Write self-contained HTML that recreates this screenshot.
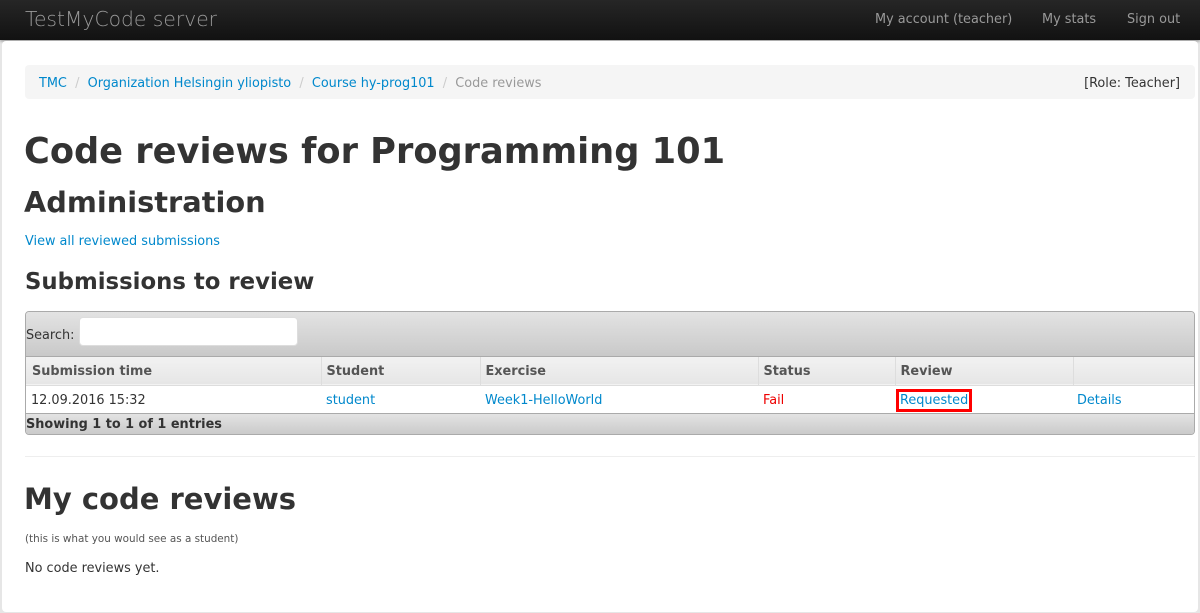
<!DOCTYPE html>
<html><head><style>
*{box-sizing:border-box;margin:0;padding:0}
body{width:1200px;height:613px;background:#e6e6e6;font-family:"DejaVu Sans","Liberation Sans",sans-serif;font-size:12.85px;color:#333;position:relative;overflow:hidden}
.a{position:absolute;white-space:nowrap}
a{color:#0088cc;text-decoration:none}
.nav{position:absolute;left:0;top:0;width:1200px;height:40px;background:linear-gradient(#262626,#121212);box-shadow:0 1px 3px rgba(0,0,0,.4)}
.wrap{position:absolute;left:2px;top:41px;width:1196px;height:571px;background:#fff;border-radius:4px}
.bc{position:absolute;left:25px;top:65px;width:1170px;height:34px;background:#f5f5f5;border-radius:4px}
.sep{color:#ccc}
th,td{text-align:left;padding-top:2px}
</style></head><body>
<div class="nav">
<div class="a" style="left:25px;top:6px;font-size:20.3px;line-height:26px;color:#999;font-weight:300">TestMyCode server</div>
<div class="a" style="left:875px;top:12px;line-height:16px;color:#999">My account (teacher)</div>
<div class="a" style="left:1042px;top:12px;line-height:16px;color:#999">My stats</div>
<div class="a" style="left:1127px;top:12px;line-height:16px;color:#999">Sign out</div>
</div>
<div class="wrap"></div>
<div class="bc"></div>
<div class="a" style="left:39px;top:76px;line-height:16px"><a>TMC</a> <span class="sep">&nbsp;/&nbsp;</span> <a>Organization Helsingin yliopisto</a> <span class="sep">&nbsp;/&nbsp;</span> <a>Course hy-prog101</a> <span class="sep">&nbsp;/&nbsp;</span> <span style="color:#999">Code reviews</span></div>
<div class="a" style="right:20px;top:76px;line-height:16px">[Role: Teacher]</div>
<div class="a" style="left:24px;top:129px;font-size:35.2px;line-height:46px;font-weight:bold">Code reviews for Programming 101</div>
<div class="a" style="left:24px;top:184px;font-size:28.8px;line-height:36px;font-weight:bold">Administration</div>
<div class="a" style="left:25px;top:234px;line-height:16px"><a>View all reviewed submissions</a></div>
<div class="a" style="left:25px;top:268px;font-size:22.8px;line-height:28px;font-weight:bold">Submissions to review</div>
<div class="a" style="left:25px;top:311px;width:1170px;height:124px;border:1px solid #aaa;border-radius:4px;overflow:hidden">
 <div style="height:45px;background:linear-gradient(#e3e3e3,#c9c9c9);position:relative;border-bottom:1px solid #aaa">
  <div class="a" style="left:0;top:16px;line-height:16px">Search:</div>
  <div class="a" style="left:53px;top:5px;width:219px;height:29px;background:#fff;border:1px solid #ddd;border-radius:4px"></div>
 </div>
 <table style="border-collapse:collapse;width:1168px;font-size:12.85px">
  <tr style="height:28px;background:linear-gradient(#f2f2f2,#e6e6e6);color:#555;font-weight:bold;border-bottom:1px solid #ddd">
   <th style="width:295px;padding-left:6px;border-right:1px solid #ddd">Submission time</th>
   <th style="width:159px;padding-left:5px;border-right:1px solid #ddd">Student</th>
   <th style="width:278px;padding-left:5px;border-right:1px solid #ddd">Exercise</th>
   <th style="width:137px;padding-left:5px;border-right:1px solid #ddd">Status</th>
   <th style="width:178px;padding-left:5px;border-right:1px solid #ddd">Review</th>
   <th></th>
  </tr>
  <tr style="height:28px;background:#fff">
   <td style="padding-left:5px">12.09.2016 15:32</td>
   <td style="padding-left:5px"><a>student</a></td>
   <td style="padding-left:5px"><a>Week1-HelloWorld</a></td>
   <td style="padding-left:5px;color:#e00">Fail</td>
   <td style="padding-left:1px"><a style="border:3px solid #f00;padding:1px 1px">Requested</a></td>
   <td style="padding-left:4px"><a>Details</a></td>
  </tr>
 </table>
 <div style="height:22px;background:linear-gradient(#e3e3e3,#c9c9c9);border-top:1px solid #aaa;font-weight:bold;line-height:22px;padding-left:0">Showing 1 to 1 of 1 entries</div>
</div>
<div class="a" style="left:25px;top:456px;width:1170px;height:1px;background:#eee"></div>
<div class="a" style="left:24px;top:481px;font-size:29px;line-height:36px;font-weight:bold">My code reviews</div>
<div class="a" style="left:25px;top:533px;font-size:10.4px;line-height:12px;color:#555">(this is what you would see as a student)</div>
<div class="a" style="left:25px;top:561px;line-height:16px">No code reviews yet.</div>
</body></html>
